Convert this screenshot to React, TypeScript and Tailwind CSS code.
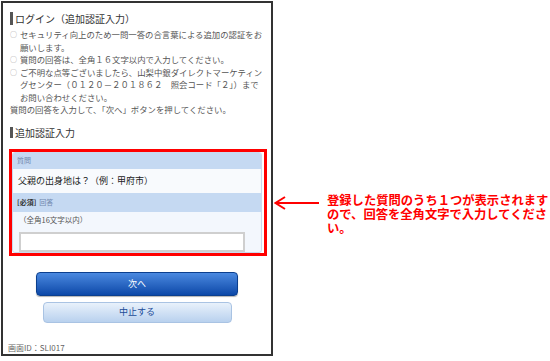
export default function App() {
  const jp = { fontFamily: '"Noto Sans CJK JP", "Noto Sans", sans-serif' };
  return (
    <div className="w-[550px] h-[361px] bg-white flex items-start pl-[1px] pt-[1px]" style={jp}>
      {/* phone screen */}
      <div className="w-[272px] h-[355px] border-2 border-[#333] flex flex-col">
        {/* title */}
        <div className="flex items-center mt-[9px] ml-[7px] h-[13px]">
          <div className="w-[3px] h-[13px] bg-[#555]" />
          <span className="ml-[2px] text-[10px] leading-[13px] text-[#333] whitespace-nowrap">ログイン（追加認証入力）</span>
        </div>

        <div className="mt-[3px] ml-[7px] text-[8.4px] leading-[12.5px] text-[#555] whitespace-nowrap">
          <div className="flex">
            <span className="w-[10px] shrink-0 text-[7px] text-[#999]">○</span>
            <span>
              セキュリティ向上のため一問一答の合言葉による追加の認証をお
              <br />
              願いします。
            </span>
          </div>
          <div className="flex">
            <span className="w-[10px] shrink-0 text-[7px] text-[#999]">○</span>
            <span>質問の回答は、全角１６文字以内で入力してください。</span>
          </div>
          <div className="flex">
            <span className="w-[10px] shrink-0 text-[7px] text-[#999]">○</span>
            <span>
              ご不明な点等ございましたら、山梨中銀ダイレクトマーケティン
              <br />
              グセンター（０１２０－２０１８６２　照会コード「２」）まで
              <br />
              お問い合わせください。
            </span>
          </div>
          <div>質問の回答を入力して、「次へ」ボタンを押してください。</div>
        </div>

        {/* section */}
        <div className="flex items-center mt-[10px] ml-[7px] h-[13px]">
          <div className="w-[3px] h-[11px] bg-[#555]" />
          <span className="ml-[2px] text-[10px] leading-[13px] text-[#333]">追加認証入力</span>
        </div>

        {/* red highlight */}
        <div className="mt-[10px] ml-[6px] w-[258px] h-[107px] border-[3px] border-[#f00] pr-[2px]">
          <div className="h-full flex flex-col border border-[#c9d9ee] rounded-[3px] overflow-hidden bg-[#f3f7fd]">
            <div className="h-[16px] shrink-0 bg-[#c5d9f2] flex items-center pl-[4px] text-[7px] text-[#7088ad]">質問</div>
            <div className="h-[24px] shrink-0 bg-[#f8fafd] flex items-center pl-[5px] text-[9px] text-[#222] whitespace-nowrap">
              父親の出身地は？（例：甲府市）
            </div>
            <div className="h-[19px] shrink-0 bg-[#c5d9f2] flex items-center pl-[4px] text-[7px]">
              <span className="font-bold text-[#333]">[必須]</span>
              <span className="ml-[3px] text-[#7088ad]">回答</span>
            </div>
            <div className="flex-1 flex flex-col pl-[6px]">
              <div className="mt-[2px] h-[12px] leading-[12px] text-[7.5px] text-[#555]">（全角16文字以内）</div>
              <div className="mt-[6px] w-[226px] h-[20px] bg-white border-2 border-[#cfcfcf]" />
            </div>
          </div>
        </div>

        {/* buttons */}
        <div className="mt-[16px] mx-auto w-[202px] h-[24px] rounded-[4px] border border-[#0b3f8e] bg-gradient-to-b from-[#4a89e0] to-[#0b48a8] flex items-center justify-center text-white text-[9px] shadow-[0_1px_1px_rgba(0,0,0,0.3)]">
          次へ
        </div>
        <div className="mt-[6px] mx-auto w-[189px] h-[21px] rounded-[4px] border border-[#a9c3e3] bg-gradient-to-b from-[#e8f1fb] to-[#b9d1ee] flex items-center justify-center text-[#1b4b97] text-[9px]">
          中止する
        </div>

        <div className="mt-auto ml-[5px] h-[12px] leading-[12px] text-[8px] text-[#666]">画面ID：SLI017</div>
      </div>

      {/* annotation */}
      <svg className="mt-[194px] ml-[1px] shrink-0" width="46" height="16" viewBox="0 0 46 16">
        <line x1="1.5" y1="8" x2="45" y2="8" stroke="#f00" strokeWidth="2" />
        <polyline points="11,2 1.5,8 11,14" fill="none" stroke="#f00" strokeWidth="2" />
      </svg>
      <div className="mt-[192px] ml-[7px] text-[12.3px] leading-[14px] font-bold text-[#f00] whitespace-nowrap">
        <div className="h-[14px]">登録した質問のうち１つが表示されます</div>
        <div className="h-[14px]">ので、回答を全角文字で入力してくださ</div>
        <div className="h-[14px]">い。</div>
      </div>
    </div>
  );
}
